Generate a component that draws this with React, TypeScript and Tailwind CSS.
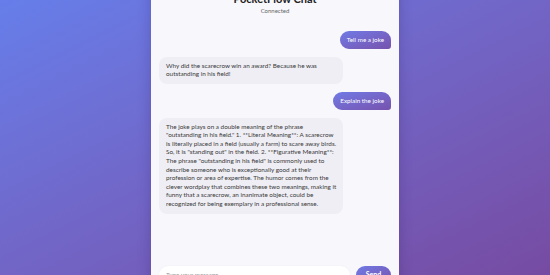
import { useState } from "react";

type Msg = { role: "user" | "bot"; text: string };

const messages: Msg[] = [
  { role: "user", text: "Tell me a joke" },
  {
    role: "bot",
    text: "Why did the scarecrow win an award? Because he was outstanding in his field!",
  },
  { role: "user", text: "Explain the joke" },
  {
    role: "bot",
    text: 'The joke plays on a double meaning of the phrase "outstanding in his field." 1. **Literal Meaning**: A scarecrow is literally placed in a field (usually a farm) to scare away birds. So, it is "standing out" in the field. 2. **Figurative Meaning**: The phrase "outstanding in his field" is commonly used to describe someone who is exceptionally good at their profession or area of expertise. The humor comes from the clever wordplay that combines these two meanings, making it funny that a scarecrow, an inanimate object, could be recognized for being exemplary in a professional sense.',
  },
];

export default function App() {
  const [draft, setDraft] = useState("");

  return (
    <div
      className="h-screen w-full overflow-hidden flex items-center justify-center bg-gradient-to-br from-[#667eea] to-[#764ba2]"
      style={{ fontFamily: "Lato, 'Open Sans', sans-serif" }}
    >
      <div className="w-[248px] h-[308px] shrink-0 flex flex-col bg-[#f8f7fc] shadow-[0_0_12px_rgba(40,20,90,0.25)]">
        {/* Header */}
        <div className="flex flex-col items-center pt-[8px] pb-[8px]">
          <h1 className="text-[11px] leading-[13px] font-bold text-[#222]">PocketFlow Chat</h1>
          <span className="mt-[1px] text-[6px] leading-[9px] text-[#666]">Connected</span>
        </div>

        {/* Messages */}
        <div className="flex-1 flex flex-col gap-[8px] px-[8px] pt-[8px] overflow-hidden">
          {messages.map((m, i) =>
            m.role === "user" ? (
              <div key={i} className="flex justify-end">
                <div className="rounded-[9px] rounded-br-[3px] bg-gradient-to-br from-[#6f7be6] to-[#7652ae] px-[7px] py-[4px] text-[6.3px] leading-[10px] text-white">
                  {m.text}
                </div>
              </div>
            ) : (
              <div key={i} className="flex justify-start">
                <div className="w-fit max-w-[184px] rounded-[8px] bg-[#efeef4] pl-[7px] pr-[5px] py-[5px] text-[6.35px] leading-[8.6px] text-[#3a3a3a]">
                  {m.text}
                </div>
              </div>
            )
          )}
        </div>

        {/* Input */}
        <div className="flex items-center gap-[6px] px-[8px] pb-[8px] pt-[6px]">
          <input
            value={draft}
            onChange={(e) => setDraft(e.target.value)}
            placeholder="Type your message..."
            className="flex-1 h-[18px] rounded-full bg-white px-[7px] text-[6.3px] text-[#333] placeholder:text-[#999] outline-none shadow-[0_0_2px_rgba(0,0,0,0.06)]"
          />
          <button className="h-[18px] w-[35px] rounded-full bg-gradient-to-br from-[#6f7be6] to-[#7652ae] text-[7px] font-bold text-white">
            Send
          </button>
        </div>
      </div>
    </div>
  );
}
